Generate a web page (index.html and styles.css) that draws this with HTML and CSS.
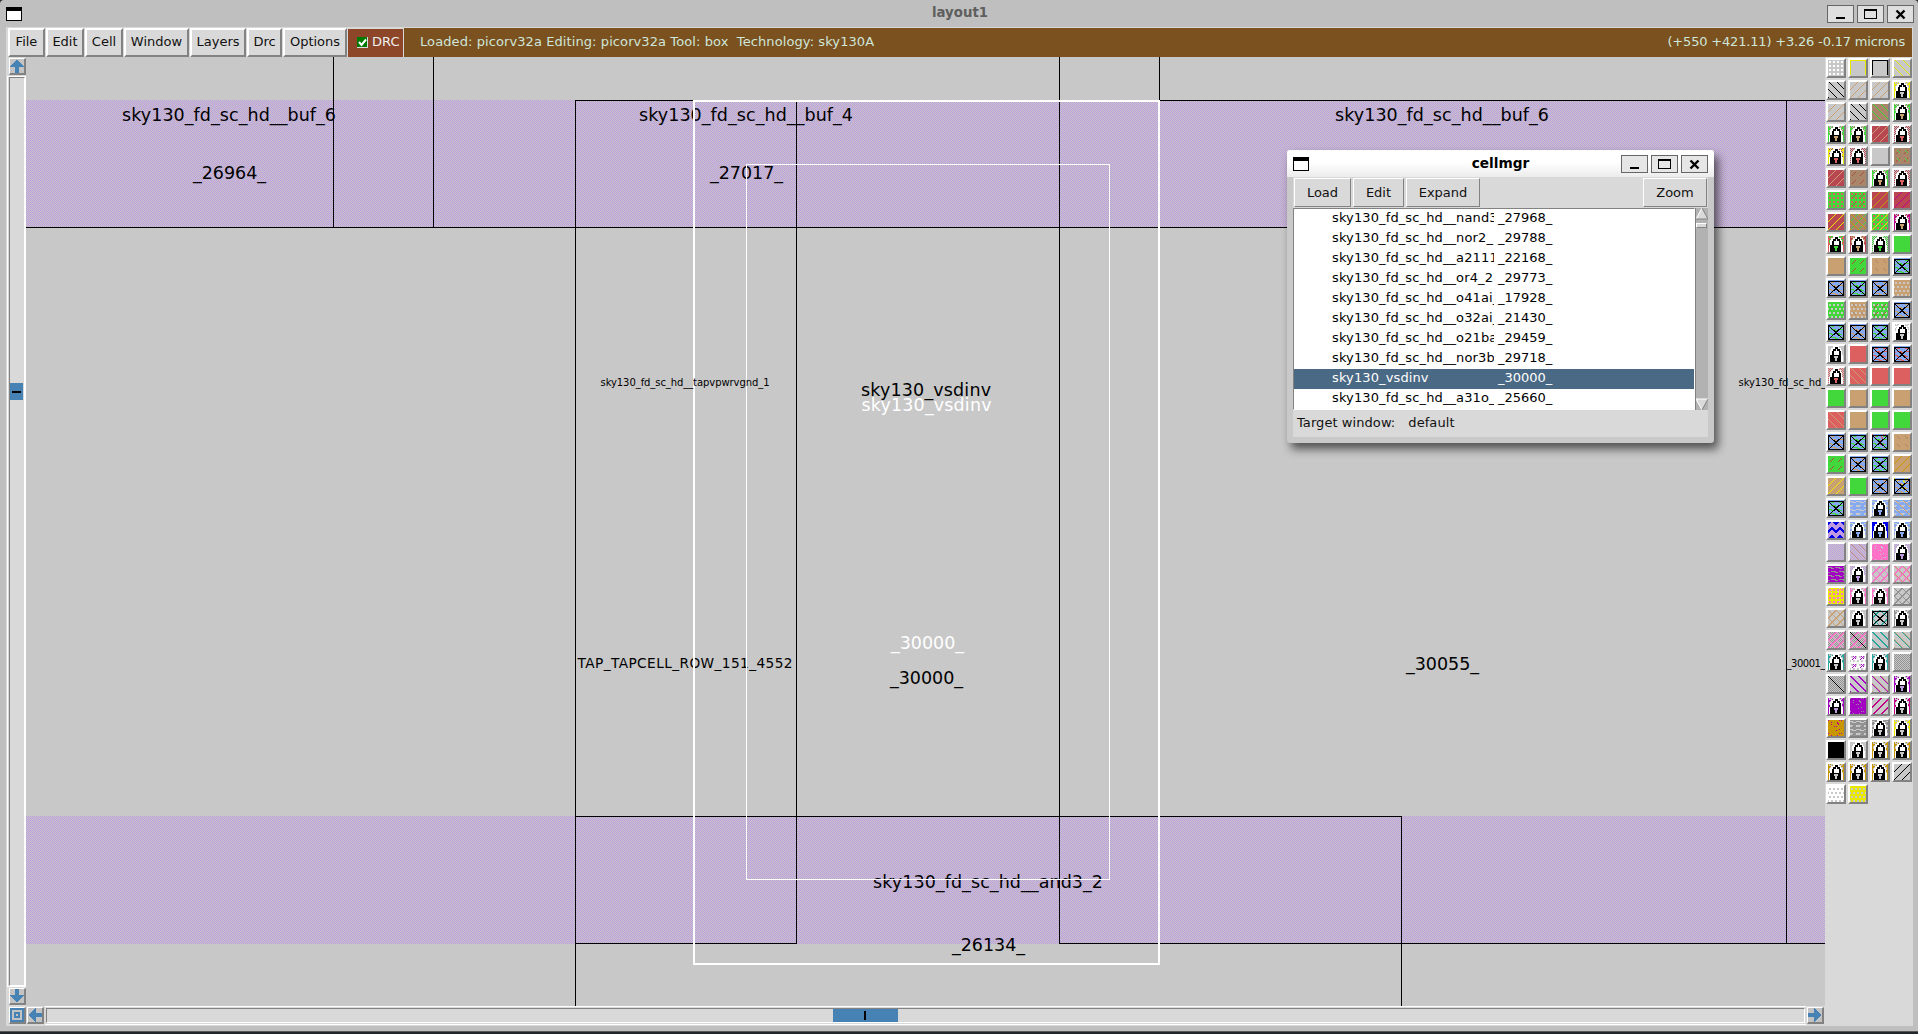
FILE: index.html
```html
<!DOCTYPE html>
<html lang="en">
<head>
<meta charset="utf-8">
<title>layout1</title>
<link rel="stylesheet" href="styles.css">
</head>
<body>
<div class="window">
  <header class="titlebar">
    <i class="sysicon"></i>
    <span class="title">layout1</span>
    <div class="winbtns">
      <svg class="winbtn" viewBox="0 0 27 18"><path d="M9 12h9v2H9z"/></svg>
      <svg class="winbtn" viewBox="0 0 27 18"><path d="M7 4h13v10H7zM8 6v7h11V6z" fill-rule="evenodd"/></svg>
      <svg class="winbtn" viewBox="0 0 27 18"><path d="M9.500 5.500l8 8M17.500 5.500l-8 8" class="cross"/></svg>
    </div>
  </header>
  <div class="content">
    <nav class="menubar">
      <button class="mb m-file">File</button><button class="mb m-edit">Edit</button><button class="mb m-cell">Cell</button><button class="mb m-window">Window</button><button class="mb m-layers">Layers</button><button class="mb m-drc">Drc</button><button class="mb m-options">Options</button>
      <div class="drc"><svg class="check" viewBox="0 0 11 11"><rect width="11" height="11" fill="#dcdcdc"/><rect width="10" height="10" fill="#007a00"/><path d="M2 5l2.500 3L9 2.500" fill="none" stroke="#fff" stroke-width="2"/></svg>DRC</div>
      <div class="status"><span class="loaded">Loaded: picorv32a Editing: picorv32a Tool: box&nbsp; Technology: sky130A</span><span class="coords">(+550 +421.11) +3.26 -0.17 microns</span></div>
    </nav>
    <div class="work">
      <div class="left">
        <svg class="arrow" viewBox="0 0 13 13"><path d="M6.500 0L13 7H8v6H5V7H0z"/></svg>
        <div class="vtrough"><div class="vthumb"><i></i></div></div>
        <svg class="arrow" viewBox="0 0 13 13"><path d="M6.500 13L13 6H8V0H5v6H0z"/></svg>
        <svg class="arrow last" viewBox="0 0 13 13"><path d="M0 0h13v13H0zM2 2v9h9V2zM4 4h5v5H4zM6 6v1h1V6z" fill-rule="evenodd"/></svg>
      </div>
      <div class="center">
        <svg class="canvas" viewBox="26 57 1799 949" width="1799" height="949">
          <defs><pattern id="metal" width="2" height="2" patternUnits="userSpaceOnUse"><path d="M0 0h1v1H0zM1 1h1v1H1z" fill="#be9ae0" shape-rendering="crispEdges"/></pattern></defs>
          <rect x="26" y="57" width="1799" height="949" fill="#c8c8c8"/>
          <path d="M26 100h1799v127H26zM26 816h1799v128H26z" fill="url(#metal)"/>
          <g class="label">
            <text x="122" y="121" textLength="214">sky130_fd_sc_hd__buf_6</text>
            <text x="193" y="179" textLength="73">_26964_</text>
            <text x="639" y="121" textLength="214">sky130_fd_sc_hd__buf_4</text>
            <text x="710" y="179" textLength="73">_27017_</text>
            <text x="1335" y="121" textLength="214">sky130_fd_sc_hd__buf_6</text>
            <text x="861" y="396" textLength="130">sky130_vsdinv</text>
            <text x="890" y="684" textLength="73">_30000_</text>
            <text x="873" y="888" textLength="230">sky130_fd_sc_hd__and3_2</text>
            <text x="952" y="951" textLength="73">_26134_</text>
            <text x="1406" y="670" textLength="73">_30055_</text>
            <text class="mid" x="577.500" y="668" textLength="215">TAP_TAPCELL_ROW_151_4552</text>
            <text class="small" x="1738.500" y="386" textLength="169">sky130_fd_sc_hd__tapvpwrvgnd_1</text>
            <text class="small" x="1786.500" y="667" textLength="39">_30001_</text>
            <text class="white" x="861.500" y="411" textLength="130">sky130_vsdinv</text>
            <text class="white" x="891" y="649" textLength="73">_30000_</text>
          </g>
          <path class="edge" d="M333.500 57V227M433.500 57V227M575.500 100V1006M796.500 100V943M1059.500 57V943M1159.500 57V100M1786.500 100V943M1401.500 816V1006M575 100.500H1825M26 227.500H1825M575 816.500H1402M575 943.500H797M1059 943.500H1825"/>
          <rect class="sel" x="746.500" y="164.500" width="363" height="715" stroke-width="1"/>
          <rect class="sel" x="694" y="101" width="465" height="863" stroke-width="2"/>
          <g class="label"><text class="small" x="600.500" y="386" textLength="169">sky130_fd_sc_hd__tapvpwrvgnd_1</text></g>
        </svg>
        <div class="hbar">
          <svg class="arrow" viewBox="0 0 13 13"><path d="M0 6.500L7 0v5h6v3H7v5z"/></svg>
          <div class="htrough"><div class="hthumb"><i></i></div></div>
          <svg class="arrow" viewBox="0 0 13 13"><path d="M13 6.500L6 0v5H0v3h6v5z"/></svg>
        </div>
      </div>
      <div class="palette" id="palette"></div>
    </div>
  </div>
</div>

<section class="dialog">
  <header class="dtitle">
    <i class="sysicon"></i>
    <span class="title">cellmgr</span>
    <div class="winbtns">
      <svg class="winbtn" viewBox="0 0 27 18"><path d="M9 12h9v2H9z"/></svg>
      <svg class="winbtn" viewBox="0 0 27 18"><path d="M7 4h13v10H7zM8 6v7h11V6z" fill-rule="evenodd"/></svg>
      <svg class="winbtn" viewBox="0 0 27 18"><path d="M9.500 5.500l8 8M17.500 5.500l-8 8" class="cross"/></svg>
    </div>
  </header>
  <div class="dbody">
    <div class="dbtns"><button class="db d-load">Load</button><button class="db d-edit">Edit</button><button class="db d-expand">Expand</button><button class="db d-zoom">Zoom</button></div>
    <div class="listwrap">
      <div class="list">
        <div class="row"><span>sky130_fd_sc_hd__nand3</span><b>_27968_</b></div>
        <div class="row"><span>sky130_fd_sc_hd__nor2_</span><b>_29788_</b></div>
        <div class="row"><span>sky130_fd_sc_hd__a2111</span><b>_22168_</b></div>
        <div class="row"><span>sky130_fd_sc_hd__or4_2</span><b>_29773_</b></div>
        <div class="row"><span>sky130_fd_sc_hd__o41ai_</span><b>_17928_</b></div>
        <div class="row"><span>sky130_fd_sc_hd__o32ai_</span><b>_21430_</b></div>
        <div class="row"><span>sky130_fd_sc_hd__o21ba</span><b>_29459_</b></div>
        <div class="row"><span>sky130_fd_sc_hd__nor3b</span><b>_29718_</b></div>
        <div class="row on"><span>sky130_vsdinv</span><b>_30000_</b></div>
        <div class="row"><span>sky130_fd_sc_hd__a31o_</span><b>_25660_</b></div>
      </div>
      <div class="lscroll">
        <svg viewBox="0 0 12 12"><path d="M6 0L0 11H12z" fill="#d9d9d9"/><path d="M6 0L0 11" stroke="#fff"/><path d="M6 0l6 11H0" fill="none" stroke="#828282"/></svg>
        <i></i>
        <svg class="down" viewBox="0 0 12 12"><path d="M0 1h12L6 12z" fill="#d9d9d9"/><path d="M12 1H0l6 11" fill="none" stroke="#fff"/><path d="M12 1L6 12" stroke="#828282"/></svg>
      </div>
    </div>
    <div class="target"><span>Target window:</span><span>default</span></div>
  </div>
</section>
<script src="palette.js"></script>
</body>
</html>
```
FILE: styles.css
```css
* { box-sizing: border-box; }
html { height: 1034px; overflow: hidden; }
body {
  margin: 0; width: 1918px; height: 1034px; overflow: hidden;
  background: #22262c;
  font: 13px "DejaVu Sans", sans-serif; color: #111;
}
button { font: inherit; color: inherit; margin: 0; padding: 0; border-radius: 0; }
.window {
  height: 1032px; display: flex; flex-direction: column;
  padding: 0 5px 5px 6px; background: #bfbfbf;
  border-radius: 4px 4px 0 0; border-bottom: 1px solid #55575a;
}
.titlebar { height: 27px; flex: none; display: grid; grid-template-columns: 1fr auto 1fr; align-items: start; margin-right: -1px; }
.title { font-weight: bold; font-size: 13.700px; line-height: 18px; padding-top: 4px; }
.titlebar .title { color: #5e5e5e; font-size: 13.300px; }
.sysicon { width: 16px; height: 14px; border: 1px solid #000; border-top-width: 4px; background: #fff; margin-top: 7px; }
.winbtns { display: flex; gap: 3px; justify-self: end; margin-top: 5px; }
.winbtn { width: 27px; height: 18px; background: #dfdfdf; box-shadow: inset 0 0 0 1px #666; shape-rendering: crispEdges; }
.winbtn .cross { stroke: #000; stroke-width: 2.4; fill: none; shape-rendering: auto; }
.content { flex: 1; display: flex; flex-direction: column; background: #d9d9d9; min-height: 0; }
.menubar { height: 30px; flex: none; display: flex; padding: 1px 1px 0 2px; gap: 1px; }
.mb { height: 29px; background: #d9d9d9; border: 2px solid #fff; border-right-color: #828282; border-bottom-color: #828282; line-height: 22px; padding-bottom: 2px; }
.m-file { width: 37px; } .m-edit { width: 38px; } .m-cell { width: 38px; } .m-window { width: 65px; }
.m-layers { width: 56px; } .m-drc { width: 35px; } .m-options { width: 64px; }
.drc { width: 55px; height: 28px; margin-top: 1px; background: #8d4628; color: #f0f0f0; line-height: 26px; padding: 0 0 2px 9px; display: flex; gap: 4px; align-items: center; }
.check { width: 11px; height: 11px; }
.status { flex: 1; background: #7a511f; color: #cfe6da; display: flex; justify-content: space-between; padding: 0 7px 0 16px; line-height: 28px; }
.loaded { letter-spacing: .09px; }
.coords { letter-spacing: -.18px; }
.work { flex: 1; display: flex; min-height: 0; }
.left { width: 20px; flex: none; display: flex; flex-direction: column; align-items: center; padding-top: 1px; }
.arrow { width: 17px; height: 17px; flex: none; padding: 0; background: #c3c3c3; border: 2px solid #fff; border-right-color: #828282; border-bottom-color: #828282; border-width: 1px 2px 2px 1px; fill: #4682b4; shape-rendering: crispEdges; margin-left: 3px; }
.last { margin-top: 2px; }
.vtrough { width: 19px; height: 911px; margin: 1px 0 1px 1px; border: 1px solid #fff; background: #d9d9d9; position: relative; }
.vtrough::before { content: ""; position: absolute; inset: 0 0 0 1px; border: 1px solid #fff; border-top-color: #828282; border-left-color: #828282; }
.vthumb { height: 17px; margin: 306px 2px 0; background: #4682b4; padding: 8px 2px 0; }
.vthumb i { display: block; height: 2px; width: 9px; background: #000; }
.center { width: 1799px; flex: none; display: flex; flex-direction: column; }
.canvas { display: block; flex: none; }
.label text { font-family: "DejaVu Sans", sans-serif; font-size: 17.500px; fill: #000; }
.label .mid { font-size: 13.700px; }
.label .small { font-size: 10px; }
.label .white { fill: #fff; }
.edge { stroke: #000; stroke-width: 1; fill: none; shape-rendering: crispEdges; }
.sel { stroke: #fff; fill: none; shape-rendering: crispEdges; }
.hbar { height: 20px; display: flex; align-items: flex-start; padding-left: 1px; }
.hbar .arrow { margin: 1px 0 0; }
.htrough { width: 1761px; height: 19px; margin: 0 1px; border: 1px solid #fff; border-width: 1px 0; position: relative; background: #d9d9d9; padding: 2px 0 0 788px; }
.htrough::before { content: ""; position: absolute; inset: 1px; border: 1px solid #fff; border-top-color: #828282; border-left-color: #828282; }
.hthumb { width: 65px; height: 13px; background: #4682b4; padding: 2px 0 0 31px; }
.hthumb i { display: block; width: 2px; height: 9px; background: #000; }
.palette { flex: 1; display: grid; grid-template-columns: repeat(4, 20px); grid-auto-rows: 20px; gap: 2px; align-content: start; padding: 1px 0 0 1px; }
.sw { width: 20px; height: 20px; border: 2px solid #fff; border-right-color: #828282; border-bottom-color: #828282; background: #c8c8c8; }
.sw svg { display: block; width: 16px; height: 16px; shape-rendering: crispEdges; }

.dialog {
  position: absolute; left: 1287px; top: 150px; width: 427px; height: 293px;
  background: #c9c9c9; border-radius: 3px; padding: 0 6px 6px;
  box-shadow: 4px 6px 10px rgba(0,0,0,.6); display: flex; flex-direction: column;
}
.dtitle { height: 27px; flex: none; margin: 0 -6px; padding: 0 6px; border-radius: 3px 3px 0 0; background: linear-gradient(#fff 45%, #ececec); display: grid; grid-template-columns: 1fr auto 1fr; color: #000; }
.dtitle .winbtn { background: #e6e6e6; }
.dbody { flex: 1; background: #d9d9d9; display: flex; flex-direction: column; min-height: 0; }
.dbtns { height: 31px; flex: none; display: flex; gap: 2px; padding: 1px 1px 0; }
.db { height: 29px; background: #d9d9d9; border: 1px solid #fff; border-right-color: #828282; border-bottom-color: #828282; padding-bottom: 1px; }
.d-load { width: 57px; } .d-edit { width: 51px; } .d-expand { width: 74px; } .d-zoom { width: 64px; margin-left: auto; }
.listwrap { height: 202px; flex: none; display: flex; }
.list { width: 402px; background: #fff; border: 1px solid #828282; border-right-color: #fff; border-bottom-color: #fff; overflow: hidden; }
.row { height: 20px; line-height: 18px; display: flex; padding-left: 38px; white-space: nowrap; color: #000; }
.row span { width: 162px; overflow: hidden; margin-right: 4px; letter-spacing: .12px; }
.row b { font-weight: normal; }
.row.on { background: #4a6984; color: #fff; }
.lscroll { flex: 1; background: #b2b2b2; border-left: 1px solid #828282; display: flex; flex-direction: column; }
.lscroll svg { width: 12px; height: 12px; }
.lscroll i { height: 5px; margin: 3px 1px 0 0; background: #d9d9d9; border: 1px solid #fff; border-bottom-color: #828282; border-right-color: #828282; }
.lscroll .down { margin-top: auto; }
.target { flex: 1; display: flex; gap: 13px; padding-left: 4px; line-height: 26px; letter-spacing: .07px; }
```
FILE: palette.js
```js
// Layer palette: each swatch is a list of drawing ops, "<op><colour key>".
const C = {
  k: '#000', w: '#fff', y: '#e8e800', t: '#c9a072', n: '#a9856a', g: '#42d83c', m: '#b94752',
  r: '#dc6060', o: '#c89600', M: '#c0008a', b: '#86aaf2', B: '#0000e6', p: '#be9ae0', i: '#ff72c8',
  P: '#a400c4', T: '#2aa8a0', a: '#929292', e: '#c8c8c8', R: '#a8503c'
};
const px = (x, y, c, w = 1, h = 1) => `<rect x="${x}" y="${y}" width="${w}" height="${h}" fill="${c}"/>`;
const each = (test, c) => {
  let s = '';
  for (let y = 0; y < 16; y++) for (let x = 0; x < 16; x++) if (test(x, y)) s += px(x, y, c);
  return s;
};
const ops = {
  f: c => px(0, 0, c, 16, 16),
  // Full hatches: forward, back, and their two-pixel versions.
  '/': c => each((x, y) => (x + y) % 8 === 7, c),
  b: c => each((x, y) => (x - y + 16) % 8 === 1, c),
  2: c => each((x, y) => (x + y) % 8 < 2, c),
  3: c => each((x, y) => (x - y + 16) % 8 < 2, c),
  // Broken hatches.
  s: c => each((x, y) => (x + y) % 8 === 7 && y % 8 > 1 && y % 8 < 6, c),
  z: c => each((x, y) => (x - y + 16) % 8 === 1 && y % 8 > 1 && y % 8 < 5, c),
  // Square dots, aligned and staggered.
  '.': c => each((x, y) => (x % 4 === 1 || x % 4 === 2) && (y % 4 === 1 || y % 4 === 2), c),
  ':': c => each((x, y) => (x + (y >> 2) % 2 * 2 + 1) % 4 > 1 && y % 4 > 1, c),
  '%': c => each((x, y) => (x + y) % 2 === 0, c),
  '~': c => each((x, y) => y % 4 !== 1 ? y % 4 !== 2 || (x + y) % 8 < 4 : (x + y * 2) % 8 > 4, c),
  '-': c => each((x, y) => (y % 4 === 1 && (x + y) % 8 < 5) || (y % 4 === 2 && (x + y) % 8 > 4), c),
  c: c => each((x, y) => (x + y) % 8 === 7 || (x - y + 16) % 8 === 0 || (x + y) % 8 === 0, c),
  v: c => each((x, y) => (x * x * 7 + y * y * 5 + x * y * 3 + x) % 13 === 0, c),
  V: c => each((x, y) => (x < 3 || x > 12 || y < 2) && (x * 3 + y * 5 + x * y) % 5 < 2, c),
  u: c => each((x, y) => y % 8 < 4 ? Math.abs((x + 4) % 8 - 3.5) < 3.5 - y % 8 : Math.abs(x % 8 - 3.5) < y % 8 - 3.5, c),
  O: c => px(0, 0, c, 16, 1) + px(0, 0, c, 1, 15) + px(15, 0, c, 1, 15),
  X: () => '<path d="M.5 1.500H15.500V15.500H.5zM1 2L15 15M15 2L1 15" fill="none" stroke="#000"/>',
  K: () => '<path d="M0 0L16 16" stroke="#000" stroke-width="1.300"/>',
  L: c => `<path d="M2 9V4h1V2h2V0h6v2h2v2h1v5h1v7H1V9z" fill="#fff"/><path d="M4 9V5h1V3h2V1h3v2h2v2h1v4h-2V5H9V3H8v2H6v4z"/><path d="M2 9h11v7H2z"/><path d="M6 10h4v2H9v3H7v-3H6z" fill="${c}"/>`
};
const rows = [
  '.w|Oy|Ok|by', 'bk|/t|/t|Vy Le', '/t|bk|fn bg|%n Vg Lt', '%n Vg Lt|%n Vg Lt|fm /t|%m Lr',
  '%m Vy Lr|%m Lr|fe|fn sR zg', 'fm /t|fn sR|%n Vg Lt|%m Lr', 'fg .r|fg .r sR|fm /o|fm /M',
  'fm /y|fn /g bo|fg .r /y|%m VM Lt', 'fg Vr Lg|ft Vm Lt|%g Lg|fg', 'ft|fg sR|ft zn|fb -g X',
  'fb -t X|fb -g X|fb -t X|ft :e', 'fg :e|ft zn :e|fg :e sR|fb -t X', 'fb -g X|fb -t X|fb -g X|Vw Le',
  'Le|fr|fb -r X|fb -r X', '%r Lr|fr bt|fr|fr', 'fg|ft|fg|ft', 'fr bt|ft|fg|fg',
  'fb -t X|fb -g X|fb -g vr X|ft zn', 'fg sR|fb -t X|fb -g X|ft /o', 'ft /y|fg|fb -t X|fb -t vy X',
  'fb -g X|~b|~b Lb|~b bt', 'fp uB|~b Lb|fB Lb|~b Lb', '%p|%p bt|fi ve|%p Lp',
  'fP -a|%p Lp|ci|ci bt', 'fy ve .i|Vi Le|Vi Le|ca', 'ct|Le|cT X|Va Le',
  '%a ci|%a ci K|3T|3T bt', 'VT Le|fw :e sP zP|VT Le|%a', '%a K|3P|3P bt|VP Lp',
  'VP Lp|fP va|2M|VM Le', 'fo va vM|~a|~a Le|Vy Le', 'fk|Le|Vo Le|Vo Le', 'Vo Le|Vo Le|Vo Le|/k', 'fw :e|fy :e'
];
let html = '';
rows.forEach(r => r.split('|').forEach(cell => {
  const art = cell.split(' ').map(t => ops[t[0]](C[t[1]])).join('');
  html += `<div class="sw"><svg viewBox="0 0 16 16">${art}</svg></div>`;
}));
document.getElementById('palette').innerHTML = html;
```
